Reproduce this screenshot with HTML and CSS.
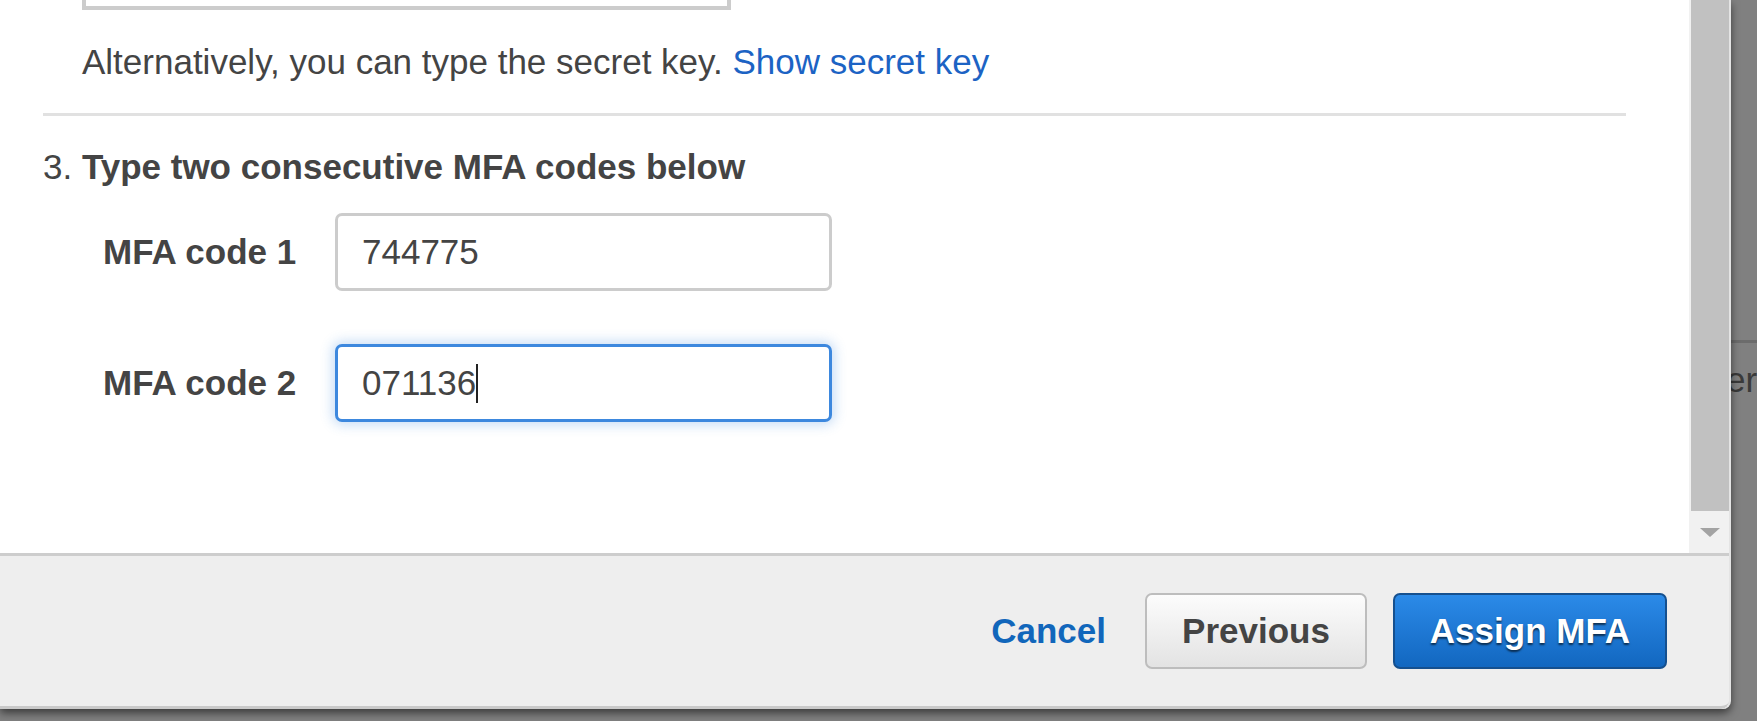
FILE: index.html
```html
<!DOCTYPE html>
<html lang="en">
<head>
<meta charset="utf-8">
<title>Assign MFA</title>
<link rel="stylesheet" href="styles.css">
</head>
<body>
<div class="backdrop-page">
  <div class="bg-rule"></div>
  <div class="bg-text">Owner</div>
</div>
<div class="modal">
  <div class="modal-body">
    <div class="content">
      <div class="qr-box"></div>
      <p class="alt">Alternatively, you can type the secret key. <a class="link" href="#">Show secret key</a></p>
      <hr class="divider">
      <h3 class="step">3. <strong>Type two consecutive MFA codes below</strong></h3>
      <div class="field-row">
        <label class="field-label">MFA code 1</label>
        <div class="field">744775</div>
      </div>
      <div class="field-row second">
        <label class="field-label">MFA code 2</label>
        <div class="field focused">071136<span class="caret"></span></div>
      </div>
    </div>
    <div class="scrollbar">
      <div class="thumb"></div>
      <div class="arrow-btn"><span class="arrow"></span></div>
    </div>
  </div>
  <div class="modal-footer">
    <a class="cancel" href="#">Cancel</a>
    <button class="btn btn-secondary">Previous</button>
    <button class="btn btn-primary">Assign MFA</button>
  </div>
</div>
</body>
</html>
```

FILE: styles.css
```css
* { box-sizing: border-box; }
html, body { margin: 0; height: 100%; }
body {
  background: #808080;
  overflow: hidden;
  font-family: "Liberation Sans", Arial, sans-serif;
  font-size: 35px;
  color: #444;
  position: relative;
}
.backdrop-page { position: absolute; inset: 0; z-index: 0; }
.bg-rule { position: absolute; top: 340px; left: 1700px; right: 0; height: 3px; background: #6c6c6c; }
.bg-text { position: absolute; left: 1654px; top: 360px; line-height: 40px; color: #3a3a3a; }

.modal {
  position: relative;
  z-index: 1;
  width: 1731px;
  height: 709px;
  background: #fff;
  display: flex;
  flex-direction: column;
  border-right: 2px solid #e4e4e4;
  border-bottom-right-radius: 8px;
  box-shadow: 0 4px 8px rgba(0, 0, 0, 0.55);
}
.modal-body { flex: 1; display: flex; min-height: 0; }
.content { flex: 1; padding: 0 63px 0 43px; }

.qr-box { margin-left: 39px; width: 649px; height: 10px; border: 4px solid #cccccc; border-top: none; }
.alt { margin: 32px 0 0 39px; line-height: 40px; color: #444; }
.link { color: #1c63c4; text-decoration: none; }
.divider { margin: 31px 0 0; border: 0; height: 3px; background: #e1e1e1; }
.step { margin: 31px 0 0; font-size: 35px; line-height: 40px; font-weight: normal; color: #444; }
.step strong { font-weight: bold; }

.field-row { display: flex; align-items: center; margin: 26px 0 0 60px; }
.field-row.second { margin-top: 53px; }
.field-label { width: 232px; font-weight: bold; line-height: 40px; color: #444; }
.field {
  width: 497px;
  height: 78px;
  border: 3px solid #cccccc;
  border-radius: 7px;
  padding-left: 24px;
  display: flex;
  align-items: center;
  line-height: 40px;
  color: #444;
  background: #fff;
}
.field.focused { border-color: #3d88de; box-shadow: 0 0 12px 3px rgba(61, 136, 222, 0.28); }
.caret { display: inline-block; width: 2px; height: 39px; background: #222; }

.scrollbar { width: 40px; background: #f1f1f1; display: flex; flex-direction: column; }
.thumb { height: 511px; margin-left: 2px; background: #c1c1c1; }
.arrow-btn { flex: 1; display: flex; align-items: center; justify-content: center; padding-left: 2px; }
.arrow { width: 0; height: 0; border-left: 10px solid transparent; border-right: 10px solid transparent; border-top: 9px solid #a3a3a3; }

.modal-footer {
  height: 156px;
  border-top: 3px solid #cdcdcd;
  border-bottom: 3px solid #c9c9c9;
  background: #eeeeee;
  display: flex;
  align-items: center;
  justify-content: flex-end;
  padding-right: 62px;
  border-bottom-right-radius: 8px;
}
.cancel { font-weight: bold; color: #1166bb; text-decoration: none; margin-right: 39px; }
.btn {
  height: 76px;
  padding: 0;
  border-radius: 7px;
  border: 2px solid;
  font-family: "Liberation Sans", Arial, sans-serif;
  font-size: 35px;
  font-weight: bold;
  text-align: center;
}
.btn-secondary {
  width: 222px;
  margin-right: 26px;
  color: #444;
  border-color: #bdbdbd;
  background: linear-gradient(#fcfcfc, #e3e3e3);
}
.btn-primary {
  width: 274px;
  color: #fff;
  border-color: #15508f;
  background: linear-gradient(#2b8ae8, #1267c0);
  text-shadow: 0 2px 2px rgba(0, 0, 0, 0.6);
}
```
